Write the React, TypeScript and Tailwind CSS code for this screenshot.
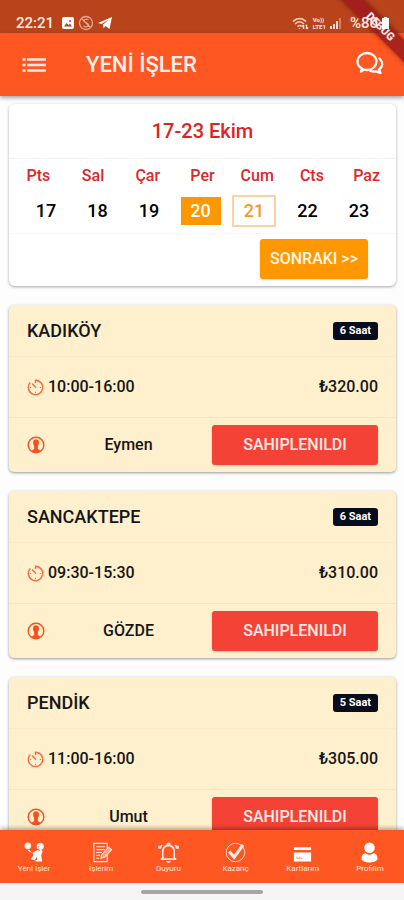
import React from 'react';

type Job = { place: string; hours: string; time: string; price: string; person: string };

const jobs: Job[] = [
  { place: 'KADIKÖY', hours: '6 Saat', time: '10:00-16:00', price: '₺320.00', person: 'Eymen' },
  { place: 'SANCAKTEPE', hours: '6 Saat', time: '09:30-15:30', price: '₺310.00', person: 'GÖZDE' },
  { place: 'PENDİK', hours: '5 Saat', time: '11:00-16:00', price: '₺305.00', person: 'Umut' },
];

const weekdays = ['Pts', 'Sal', 'Çar', 'Per', 'Cum', 'Cts', 'Paz'];
const days = [17, 18, 19, 20, 21, 22, 23];

function dayClass(day: number) {
  if (day === 20) return 'h-7 w-10 bg-[#ff9800] text-white';
  if (day === 21) return 'h-8 w-11 border-2 border-[#fbd3a0] text-[#f59a23]';
  return 'h-7 w-10 text-black';
}

function StatusBar() {
  return (
    <div className="flex h-[33px] shrink-0 items-end justify-between bg-[#b9431b] pr-[14px] pl-4 text-[#ffeae0]">
      <div className="flex h-5 items-center gap-1">
        <span className="mr-1 text-[15px] font-medium">22:21</span>
        <svg className="h-3 w-3" viewBox="0 0 12 12">
          <rect width="12" height="12" rx="2" fill="#fff" />
          <path d="M2 9.500l2.500-3.500 2 2 1.500-1.500 2 3z" fill="#b9431b" />
          <circle cx="8" cy="4" r="1" fill="#b9431b" />
        </svg>
        <svg className="h-4 w-4" viewBox="0 0 16 16" fill="none" stroke="#e9a78f" strokeWidth="1.300">
          <circle cx="8" cy="8" r="6.500" />
          <path d="M3.500 3.500l9 9M10.500 4.500c-3-1-5 .5-4 2s4 1.500 4 3.500-3 2.500-5 1" />
        </svg>
        <svg className="h-3 w-[14px]" viewBox="0 0 14 12" fill="#fff">
          <path d="M0 6L14 0l-2.500 12-4-3-2 2.500-.5-4L11 2.500 3.500 7z" />
        </svg>
      </div>
      <div className="relative z-30 flex h-5 items-center gap-1">
        <svg className="h-[13px] w-[17px]" viewBox="0 0 17 13" fill="none" stroke="#fbd9cc" strokeWidth="1.500">
          <path d="M1 4.500c4-4 9-4 13 0M3 7c3-3 6-3 9 0M5.500 9.500c1.500-1.500 3-1.500 4 0" />
          <path d="M7.500 11v1M11.500 12V8m-1.500 1.500L11.500 8M14.500 7.500v4.500m1.500-1.500L14.500 12" />
        </svg>
        <span className="flex flex-col text-[6px] leading-[7px] font-bold">
          <span>Vo))</span>
          <span>LTE1</span>
        </span>
        <svg className="mr-1 h-[11px] w-3" viewBox="0 0 12 11" fill="#fbd9cc">
          <path d="M0 8h2v3H0zM3 6h2v5H3zM6 3h2v8H6z" />
          <path d="M9 0h2v11H9z" opacity=".4" />
        </svg>
        <span className="text-[15px] font-medium">%80</span>
        <svg className="h-3 w-2" viewBox="0 0 8 12" fill="#fff">
          <path d="M2 0h3v1h2v11H0V1h2z" />
        </svg>
      </div>
    </div>
  );
}

function Header() {
  return (
    <header className="relative z-10 flex h-[63px] shrink-0 items-center bg-[#ff5722] px-5 text-white shadow-[0_2px_4px_rgba(0,0,0,0.35)]">
      <button aria-label="Menü" className="flex h-8 w-7 items-center justify-center">
        <svg className="h-4 w-6" viewBox="0 0 24 16" fill="none" stroke="#ffeae0" strokeWidth="2.600">
          <path d="M5 2.500H24M5 8H24M5 13.500H24M.5 2.500h3M.5 8h3M.5 13.500h3" />
        </svg>
      </button>
      <h1 className="ml-[38px] grow text-[22px] font-medium text-[#fff0ea]">YENİ İŞLER</h1>
      <button aria-label="Mesajlar" className="mb-1 flex h-8 w-7 items-center justify-center">
        <svg className="h-6 w-7" viewBox="0 0 28 24" fill="none" stroke="#fff" strokeWidth="2.300" strokeLinecap="round" strokeLinejoin="round">
          <path d="M6 17.500C3 16 1.500 13.500 1.500 10.500c0-4.700 4.300-8.500 9.500-8.500s9.500 3.800 9.500 8.500S16.500 19 11 19c-1.200 0-2.300-.2-3.300-.5L5 20.500z" />
          <path d="M23.500 7.500c4 4 3.500 8-.5 11l1.500 3.500-4.500-1.700c-2 .4-4 .2-5.500-.3" />
        </svg>
      </button>
    </header>
  );
}

function Calendar() {
  return (
    <section className="rounded-md bg-white font-medium shadow-[0_1px_3px_rgba(0,0,0,0.35)]">
      <h2 className="flex h-[55px] items-center justify-center border-b border-[#f1f1f1] text-xl text-[#dc2424]">17-23 Ekim</h2>
      <div className="grid h-[34px] grid-cols-7 items-center px-[2px] text-center text-base text-[#dc2828]">
        {weekdays.map((d) => <span key={d}>{d}</span>)}
      </div>
      <div className="flex h-9 items-center justify-between px-[17px] text-lg">
        {days.map((d) => (
          <button key={d} className={`flex items-center justify-center ${dayClass(d)}`}>{d}</button>
        ))}
      </div>
      <div className="mt-1 flex justify-end border-t border-[#f8f8f8] pt-[5px] pr-7 pb-[7px]">
        <button className="h-10 w-[108px] rounded-[3px] bg-[#ff9800] text-base text-[#fff6e5] shadow-[0_1px_2px_rgba(0,0,0,0.15)]">SONRAKI &gt;&gt;</button>
      </div>
    </section>
  );
}

function JobCard({ job }: { job: Job }) {
  return (
    <article className="rounded-[5px] bg-[#feefcd] font-medium text-[#161616] shadow-[0_1px_3px_rgba(0,0,0,0.4)]">
      <div className="flex h-[52px] items-center justify-between border-b border-[#fbeac4] px-[18px]">
        <h3 className="text-lg">{job.place}</h3>
        <span className="rounded-[3px] bg-[#080c1c] px-[7px] text-[11px] leading-[18px] font-bold text-white">{job.hours}</span>
      </div>
      <div className="flex h-[61px] items-center justify-between border-b border-[#f6e5be] px-[18px] text-base">
        <span className="flex items-center gap-1">
          <svg className="h-[17px] w-[17px]" viewBox="0 0 17 17" fill="none" stroke="#f8693c" strokeWidth="1.400">
            <path d="M8.500 4V1.200a7.200 7.200 0 1 1-5.200 2.200M5 4.500l4 4" />
            <path d="M3 8.500h1.200M14 8.500h-1.200M8.500 14v-1.200" strokeWidth="1" />
          </svg>
          {job.time}
        </span>
        <span>{job.price}</span>
      </div>
      <div className="flex h-[54px] items-center px-[18px] text-base">
        <svg className="h-[18px] w-[18px] shrink-0" viewBox="0 0 18 18">
          <circle cx="9" cy="9" r="7.800" fill="none" stroke="#f4511e" strokeWidth="1.400" />
          <path d="M9 3.300c2 0 3 1.300 3 3.200 0 1.500-.6 2.500-1.100 3.200v3.300l2.600 1.800c-2.500 2.500-6.500 2.500-9 0l2.600-1.800V9.700C6.600 9 6 8 6 6.500c0-1.900 1-3.200 3-3.200z" fill="#f4511e" />
        </svg>
        <span className="grow text-center">{job.person}</span>
        <button className="h-10 w-[166px] rounded-[3px] bg-[#f44336] text-[#ffe9e5] shadow-[0_1px_2px_rgba(0,0,0,0.15)]">SAHIPLENILDI</button>
      </div>
    </article>
  );
}

const navItems = [
  {
    label: 'Yeni İşler',
    icon: (
      <>
        <circle cx="4" cy="4" r="3" fill="#fff" />
        <circle cx="17" cy="4.500" r="3.200" fill="#fff" />
        <path d="M5 8l4 3.500 5-3 4-.5 1.500 2-1.500 4 1 6.500h-7v-1.500l2-.5-.5-3-2.500 3.500-4-1 3-4.500-1-2-3-1L4 9z" fill="#fff" stroke="none" />
        <path d="M14.500 7.500l2 1.500M15 5h1" stroke="#ff5722" />
      </>
    ),
  },
  {
    label: 'İşlerim',
    icon: (
      <>
        <path d="M17 13v7.500H3v-19h14v5M5.500 5h9M5.500 8h9M5.500 11h6M5.500 14h4M5.500 17h3" />
        <path d="M11 13.500l7.500-8 3 2.500-7.500 8-3.500 1z" fill="#ff9a78" />
      </>
    ),
  },
  {
    label: 'Duyuru',
    icon: (
      <>
        <path d="M5 17V10c0-3.500 2-6 6-6.500 4 .5 6 3 6 6.500v7l2 1H3zM9.500 3c0-2 3-2 3 0" strokeWidth="1.700" />
        <path d="M9 20c1 1.500 3 1.500 4 0M4 3L2 7M1.500 4L.5 7M18 3l2 4M20.500 4l1 3" strokeWidth="1.700" />
      </>
    ),
  },
  {
    label: 'Kazanç',
    icon: (
      <>
        <circle cx="11" cy="11" r="9.700" strokeWidth=".9" />
        <path d="M4.500 10l5 6L19 3" strokeWidth="3.300" />
      </>
    ),
  },
  {
    label: 'Kartlarım',
    icon: (
      <>
        <path d="M2 5.500h18v3H2zM2 11h18v9.500H2z" fill="#fff" stroke="none" />
        <path d="M5 17h6M5 15.500v1.500M8 15.500v1.500" stroke="#ff9d7b" />
      </>
    ),
  },
  {
    label: 'Profilim',
    icon: (
      <>
        <circle cx="11" cy="6" r="5.500" fill="#fff" stroke="none" />
        <path d="M2.500 18c0-4 2-6 4-6.500 3 2.500 6 2.500 9 0 2 .5 4 2.500 4 6.500-3 4.500-14 4.500-17 0z" fill="#fff" stroke="none" />
      </>
    ),
  },
];

function BottomNav() {
  return (
    <nav className="relative z-10 flex h-[53px] shrink-0 justify-between bg-[#ff5722] px-[6px] shadow-[0_-2px_4px_rgba(0,0,0,0.3)]">
      {navItems.map((item) => (
        <button key={item.label} className="flex w-14 flex-col items-center pt-3 text-[8px] leading-[12px] text-[#ffe4da]">
          <svg className="h-[21px] w-[21px]" viewBox="0 0 22 22" fill="none" stroke="#ffe9e0" strokeWidth="1.200">
            {item.icon}
          </svg>
          {item.label}
        </button>
      ))}
    </nav>
  );
}

export default function App() {
  return (
    <div className="relative flex h-screen flex-col overflow-hidden bg-[#fdfdfd] font-[Roboto,sans-serif]">
      <StatusBar />
      <Header />
      <main className="flex min-h-0 grow flex-col gap-[19px] overflow-hidden pt-2 pr-2 pl-[9px]">
        <Calendar />
        {jobs.map((job) => <JobCard key={job.place} job={job} />)}
      </main>
      <BottomNav />
      <div className="flex h-[17px] shrink-0 items-center justify-center bg-[#f5f5f5]">
        <div className="h-1 w-[122px] rounded-full bg-[#a5a5a5]" />
      </div>
      <div className="pointer-events-none absolute -top-[3px] -right-[26px] z-20 flex h-[60px] w-[100px] items-center justify-center">
        <div className="flex h-4 w-[140px] shrink-0 rotate-45 items-center justify-center bg-[#9c1a1c]/85 text-[11px] font-black text-white/90 shadow-[0_0_5px_rgba(0,0,0,0.4)]">DEBUG</div>
      </div>
    </div>
  );
}
